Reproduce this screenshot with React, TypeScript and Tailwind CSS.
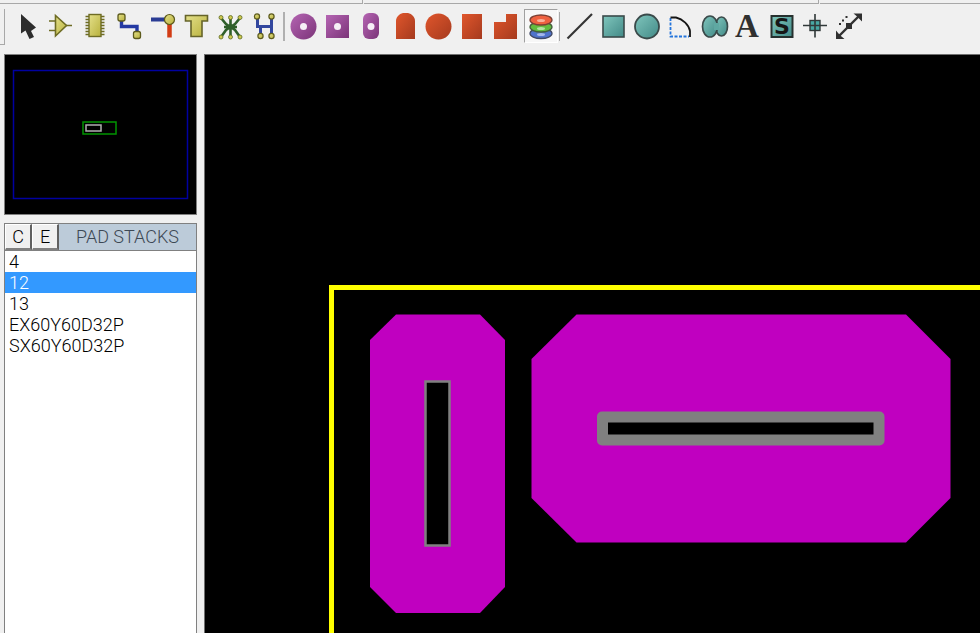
import { useState } from 'react';
import type { ReactNode } from 'react';
import clsx from 'clsx';

type Tool = { name: string; icon: ReactNode };

const padStacks = ['4', '12', '13', 'EX60Y60D32P', 'SX60Y60D32P'];

const dot = (x: number, y: number, r: number) => (
  <circle key={`${x}-${y}`} cx={x} cy={y} r={r} fill="url(#yellow)" stroke="#5c5a1c" strokeWidth="1.2" />
);

const placeTools: Tool[] = [
  {
    name: 'Select',
    icon: <path d="M11 5V24.5L15.5 21.5L19.5 30L24 28L21 22L26 18.5Z" fill="#2d2d2d" />,
  },
  {
    name: 'Component',
    icon: (
      <g stroke="#6e6c24" strokeWidth="1.6">
        <path d="M5 12H12M5 21.5H12M22 16.5H28" />
        <path d="M11.5 6.5V27L22.5 16.5Z" fill="url(#yellow)" />
      </g>
    ),
  },
  {
    name: 'Package',
    icon: (
      <g stroke="#6e6c24" strokeWidth="1.4">
        <path d="M7.500 7.5H26.5M7.5 10.5H26.5M7.5 13.5H26.5M7.5 16.5H26.5M7.5 19.5H26.5M7.5 22.5H26.5M7.5 25.5H26.5" />
        <rect x="11" y="5.5" width="12" height="22" fill="url(#yellow)" />
      </g>
    ),
  },
  {
    name: 'Track',
    icon: (
      <>
        <path d="M9.5 8V17.5H25V26" fill="none" stroke="#2439a3" strokeWidth="3.4" />
        <rect x="6" y="5" width="7" height="7" rx="2" fill="url(#yellow)" stroke="#5c5a1c" strokeWidth="1.3" />
        <rect x="21.5" y="22.5" width="7" height="7" rx="2" fill="url(#yellow)" stroke="#5c5a1c" strokeWidth="1.3" />
      </>
    ),
  },
  {
    name: 'Via',
    icon: (
      <>
        <path d="M5 10.5H20" stroke="#2a3c94" strokeWidth="4" />
        <path d="M23.5 14V28.5" stroke="#d23c14" strokeWidth="4.5" />
        {dot(23.5, 10.5, 5)}
      </>
    ),
  },
  {
    name: 'Zone',
    icon: <path d="M5.5 6.5H27.5V12H22V27.5H11V12H5.5Z" fill="url(#yellow)" stroke="#66642a" strokeWidth="1.6" />,
  },
  {
    name: 'Ratsnest',
    icon: (
      <>
        <path d="M16.5 8V29M7 9L12 15L16.5 18L21 15L26 9M7 28L12 21L16.5 18L21 21L26 28M10 18H23" fill="none" stroke="#2f5f2a" strokeWidth="2.6" />
        {[7, 16.5, 26].map((x) =>
          [8.5, 28].map((y) => <circle key={`${x}-${y}`} cx={x} cy={y} r="2" fill="#cfc94e" stroke="#5c6a24" strokeWidth="0.8" />)
        )}
      </>
    ),
  },
  {
    name: 'Connectivity',
    icon: (
      <>
        <path d="M9.5 8V17.5H23.5M23.5 8V27M12.5 17.5V27" fill="none" stroke="#33479e" strokeWidth="3" />
        {dot(9, 7.5, 2.6)}
        {dot(23.5, 7.5, 2.6)}
        {dot(12.5, 27, 2.6)}
        {dot(23.5, 27, 2.6)}
      </>
    ),
  },
];

const padTools: Tool[] = [
  {
    name: 'Round through-hole pad',
    icon: (
      <>
        <circle cx="17.5" cy="17.5" r="13" fill="url(#purple)" />
        <circle cx="17.5" cy="17.5" r="3.5" fill="#f6f0f6" />
      </>
    ),
  },
  {
    name: 'Square through-hole pad',
    icon: (
      <>
        <rect x="6" y="6" width="23" height="23" fill="url(#purple)" />
        <circle cx="17.5" cy="17.5" r="3.5" fill="#f6f0f6" />
      </>
    ),
  },
  {
    name: 'DIL pad',
    icon: (
      <>
        <rect x="9" y="4" width="16" height="26" rx="6" fill="url(#purple)" />
        <circle cx="17" cy="17.5" r="3.5" fill="#f6f0f6" />
      </>
    ),
  },
  { name: 'Edge connector pad', icon: <path d="M15 4H20C24 5 27 8 27 12V30H8V12C8 8 11 5 15 4Z" fill="url(#red)" /> },
  { name: 'Circular SMT pad', icon: <circle cx="16.5" cy="17.5" r="13" fill="url(#red)" /> },
  { name: 'Rectangular SMT pad', icon: <rect x="6" y="5" width="20" height="25" fill="url(#red)" /> },
  { name: 'Polygonal SMT pad', icon: <path d="M16 5H27V30H4V13H16Z" fill="url(#red)" /> },
  {
    name: 'Pad stack',
    icon: (
      <g strokeWidth="1.3">
        <ellipse cx="17" cy="24.5" rx="11" ry="5" fill="#4f73cc" stroke="#404a68" />
        <ellipse cx="17" cy="25.5" rx="4" ry="1.5" fill="#a4b8ea" stroke="none" />
        <ellipse cx="17" cy="18" rx="11" ry="5" fill="#62bc3f" stroke="#44603a" />
        <ellipse cx="17" cy="19.5" rx="4" ry="1.5" fill="#b4e4a2" stroke="none" />
        <ellipse cx="17" cy="11" rx="11" ry="5" fill="#ee6140" stroke="#7c4034" />
        <ellipse cx="17" cy="11.5" rx="4" ry="1.5" fill="#f9b09a" stroke="none" />
      </g>
    ),
  },
];

const drawTools: Tool[] = [
  { name: 'Line', icon: <path d="M4.5 29.5L29 5" stroke="#343434" strokeWidth="2.2" /> },
  { name: 'Box', icon: <rect x="6" y="7" width="21" height="21" fill="url(#teal)" stroke="#3a4a4a" strokeWidth="1.6" /> },
  { name: 'Circle', icon: <circle cx="17" cy="17.5" r="12" fill="url(#teal)" stroke="#3a4a4a" strokeWidth="1.8" /> },
  {
    name: 'Arc',
    icon: (
      <g fill="none">
        <path d="M6.500 9V27.5H25" stroke="#2374dc" strokeWidth="1.8" strokeDasharray="3 1.5" />
        <path d="M6.5 8.5H12C19 10 25 16 26 22V28" stroke="#151515" strokeWidth="1.8" />
      </g>
    ),
  },
  {
    name: 'Path',
    icon: (
      <g fill="url(#teal)" stroke="#3a4a4a" strokeWidth="1.7">
        <ellipse cx="23.500" cy="17.5" rx="6" ry="9.5" />
        <ellipse cx="12" cy="17.5" rx="7.5" ry="10.5" />
        <path d="M16 14H21V21H16Z" stroke="none" fill="#5fa8a2" />
      </g>
    ),
  },
  {
    name: 'Text',
    icon: (
      <text x="16" y="28" textAnchor="middle" fontSize="33" fontWeight="700" fill="#303030" className="font-['Liberation_Serif',serif]">
        A
      </text>
    ),
  },
  {
    name: 'Symbol',
    icon: (
      <>
        <rect x="6.5" y="7" width="21" height="21" fill="url(#teal)" stroke="#26302e" strokeWidth="2" />
        <text x="17" y="25" textAnchor="middle" fontSize="22" fontWeight="700" fill="#161616" className="font-['DejaVu_Sans',sans-serif]">
          S
        </text>
      </>
    ),
  },
  {
    name: 'Marker',
    icon: (
      <g stroke="#303838">
        <rect x="11" y="11.5" width="10" height="10" fill="#48a8a4" strokeWidth="1.4" />
        <path d="M4 16.5H28M16 5V28.5" strokeWidth="1.6" />
      </g>
    ),
  },
  {
    name: 'Dimension',
    icon: (
      <g fill="#303030">
        <path d="M7 27L27 7" stroke="#303030" strokeWidth="2.4" />
        <path d="M30 4.5V12.5L27.5 10L24.5 7L21.5 4.5ZM4 30V21.5L6.5 24.5L9.5 27.5L12.5 30Z" />
        <rect x="14" y="14" width="6" height="6" />
        <path d="M7 14h2v2h-2zM10 10.5h2v2h-2zM13.5 7h2v2h-2z" />
      </g>
    ),
  },
];

function ToolGroup({ tools, active, onPick, className }: { tools: Tool[]; active: string; onPick: (name: string) => void; className: string }) {
  return (
    <div className={clsx('grid shrink-0', className)}>
      {tools.map((tool) => (
        <button
          key={tool.name}
          aria-label={tool.name}
          aria-pressed={active === tool.name}
          onClick={() => onPick(tool.name)}
          className={clsx(
            'flex h-[34px] items-center justify-center border',
            active === tool.name ? 'border-t-[#a0a0a0] border-l-[#a0a0a0] border-r-white border-b-white bg-[#f7f7f7]' : 'border-transparent'
          )}
        >
          <svg viewBox="0 0 34 34" className="size-[34px] shrink-0">
            {tool.icon}
          </svg>
        </button>
      ))}
    </div>
  );
}

function Gradients() {
  const colors = [
    ['yellow', '#e4e08a', '#b8b13c'],
    ['purple', '#b565b3', '#7b3478'],
    ['red', '#e0562c', '#a53a1e'],
    ['teal', '#80c6bd', '#428a87'],
  ];
  return (
    <svg className="absolute size-0" aria-hidden="true">
      <defs>
        {colors.map(([id, from, to]) => (
          <linearGradient key={id} id={id} x1="0" y1="0" x2="1" y2="1">
            <stop offset="0" stopColor={from} />
            <stop offset="1" stopColor={to} />
          </linearGradient>
        ))}
      </defs>
    </svg>
  );
}

function Overview() {
  return (
    <div className="h-[161px] shrink-0 border border-[#808080] bg-black">
      <svg className="block size-full" fill="none">
        <rect x="8.5" y="15.5" width="174" height="128" stroke="#0000a0" strokeWidth="1.5" />
        <rect x="78" y="67" width="33" height="12" stroke="#009400" strokeWidth="1.5" />
        <rect x="81" y="70" width="15" height="6" stroke="#b0b0b0" strokeWidth="1.5" />
      </svg>
    </div>
  );
}

export default function App() {
  const [tool, setTool] = useState('Pad stack');
  const [stack, setStack] = useState('12');

  const bevel =
    'w-[27px] border-t border-l border-r-2 border-b-2 border-t-white border-l-white border-r-[#606060] border-b-[#808080] bg-[#f0f0f0] text-black';

  return (
    <div className="flex h-screen flex-col overflow-hidden bg-[#f0f0f0] font-[Roboto,sans-serif] text-black">
      <Gradients />

      <div className="flex h-1 shrink-0 gap-px">
        <div className="w-[363px] border-r border-b border-[#a8a8a8]" />
        <div className="w-[455px] border-r border-b border-[#a8a8a8]" />
        <div className="flex-1 border-b border-[#a8a8a8]" />
      </div>

      <header className="flex h-[50px] shrink-0 items-start pt-[5px]">
        <div className="mr-[5px] h-9 w-[5px] border-r border-b border-[#a8a8a8]" />
        <ToolGroup tools={placeTools} active={tool} onPick={setTool} className="w-[272px] grid-cols-8" />
        <div className="mx-px mt-[3px] h-[29px] w-0.5 bg-[#b0b0b0]" />
        <ToolGroup tools={padTools} active={tool} onPick={setTool} className="w-[272px] grid-cols-8" />
        <div className="mr-[3px] ml-px mt-[3px] h-[29px] w-px bg-[#a8a8a8]" />
        <ToolGroup tools={drawTools} active={tool} onPick={setTool} className="w-[303px] grid-cols-9" />
      </header>

      <main className="flex min-h-0 flex-1 gap-[7px] pl-1">
        <aside className="flex w-[193px] shrink-0 flex-col gap-2">
          <Overview />

          <section className="flex flex-1 flex-col border border-b-0 border-[#808080] bg-white text-lg leading-[21px] font-light">
            <div className="flex h-[27px] border-b border-[#808080] bg-[#bccbd9]">
              <button className={bevel}>C</button>
              <button className={bevel}>E</button>
              <h2 className="flex-1 pt-0.5 text-center text-[#3c4854]">PAD STACKS</h2>
            </div>
            <ul>
              {padStacks.map((name) => (
                <li key={name}>
                  <button
                    onClick={() => setStack(name)}
                    className={clsx('block h-[21px] w-full px-1 text-left', stack === name && 'bg-[#3399ff] text-white')}
                  >
                    {name}
                  </button>
                </li>
              ))}
            </ul>
          </section>
        </aside>

        <div className="min-w-0 flex-1 border-t border-l border-[#707070] bg-black">
          <svg className="block size-full">
            <path d="M2000 232.5H126.5V2000" fill="none" stroke="#ffff00" strokeWidth="5" />
            <path d="M191 259.5H275L300 285V532L275 558H191L165 532V285Z" fill="#c000c0" />
            <rect x="220.5" y="326.5" width="24" height="164" fill="#000" stroke="#808080" strokeWidth="2.5" />
            <path d="M371.5 259.5H701L745.5 304V443L701 487.5H371.5L326.5 443V304Z" fill="#c000c0" />
            <rect x="392" y="356.5" width="287.500" height="34" rx="5" fill="#808080" />
            <rect x="403" y="367.5" width="265.500" height="12" fill="#000" />
          </svg>
        </div>
      </main>
    </div>
  );
}
